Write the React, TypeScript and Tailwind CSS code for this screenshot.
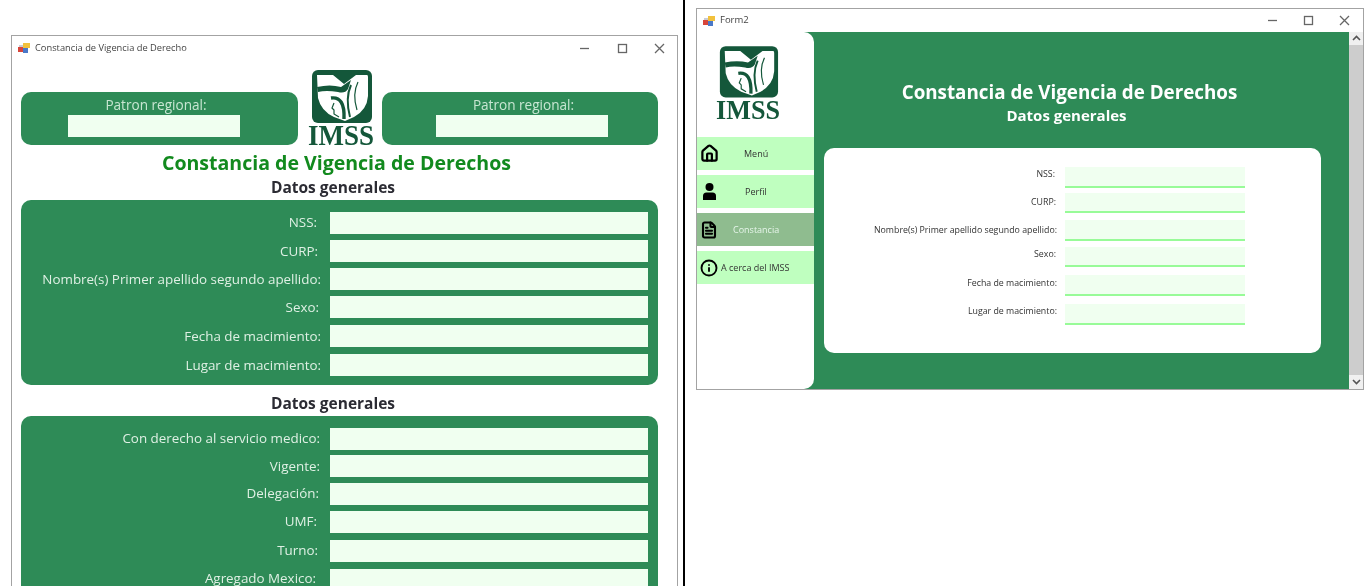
import { Home, FileText, Info } from "lucide-react";

const sans = "font-['Open_Sans',sans-serif]";

function AppIcon() {
  return (
    <svg width="13" height="12" viewBox="0 0 13 12" className="shrink-0">
      <rect x="0" y="5" width="5" height="5" fill="#d8453a" />
      <rect x="5" y="1" width="7" height="5" fill="#f2c13c" />
      <rect x="5" y="6" width="5" height="5" fill="#4a78c8" />
      <rect x="1" y="3" width="4" height="2" fill="#c9ccd6" />
    </svg>
  );
}

function WinButtons({ gapClass }: { gapClass: string }) {
  return (
    <div className={`flex items-center ${gapClass}`}>
      <svg width="11" height="11" viewBox="0 0 11 11"><path d="M1 5.5H10" stroke="#666" strokeWidth="1.3" /></svg>
      <svg width="11" height="11" viewBox="0 0 11 11"><rect x="1.5" y="1.5" width="8" height="8" fill="none" stroke="#666" strokeWidth="1.3" /></svg>
      <svg width="11" height="11" viewBox="0 0 11 11"><path d="M1 1L10 10M10 1L1 10" stroke="#666" strokeWidth="1.3" /></svg>
    </div>
  );
}

function Logo({ width, height }: { width: number; height: number }) {
  return (
    <svg width={width} height={height} viewBox="0 0 66 77" className="shrink-0 overflow-visible">
      <rect x="4" y="1" width="60" height="53" rx="6" fill="#14573a" />
      <g transform="translate(4 1)">
        <path d="M5 5L21 5L32 14L44 5L55 5Q56 5 56 7L56 26Q55 40 42 47L33 51L22 47Q9 41 6 28Z" fill="#fff" />
        <path d="M5 17Q18 14 29 17L39 10L36 19Q33 24 26 22Q14 20 6 22Z" fill="#14573a" />
        <path d="M39 15Q33 28 38 47" fill="none" stroke="#14573a" strokeWidth="2" />
        <path d="M46 12Q40 24 45 40" fill="none" stroke="#14573a" strokeWidth="1.2" />
        <path d="M19 28Q33 26 32 49" fill="none" stroke="#14573a" strokeWidth="3.4" />
        <path d="M22 33L20 38L22 40L22 44L27 47" fill="none" stroke="#14573a" strokeWidth="1.2" />
      </g>
      <text x="33" y="76" textAnchor="middle" textLength="66" lengthAdjust="spacingAndGlyphs" fontFamily="Liberation Serif, serif" fontWeight="700" fontSize="29" fill="#14573a">IMSS</text>
    </svg>
  );
}

function PersonIcon() {
  return (
    <svg width="13" height="17" viewBox="0 0 13 17">
      <circle cx="6.5" cy="4" r="4" fill="#000" />
      <path d="M0 17V13Q0 9.5 3.5 9.5H9.5Q13 9.5 13 13V17Z" fill="#000" />
    </svg>
  );
}

function LeftRow({ label, rowClass, labelClass }: { label: string; rowClass: string; labelClass: string }) {
  return (
    <div className={`flex items-start ${rowClass}`}>
      <div className={`w-[309px] text-right text-[13.4px] leading-[22px] text-[#dff0e4] whitespace-nowrap ${labelClass}`}>{label}</div>
      <div className="w-[318px] h-[22px] bg-[#f0fff0]" />
    </div>
  );
}

function PatronPanel({ widthClass, textClass, inputClass }: { widthClass: string; textClass: string; inputClass: string }) {
  return (
    <div className={`${widthClass} h-[53px] mb-[1px] rounded-[10px] bg-[#2e8b57] flex flex-col items-center pt-[3px]`}>
      <div className={`text-[13.6px] leading-[19px] text-[#c8e6d2] ${textClass}`}>Patron regional:</div>
      <div className={`w-[172px] h-[22px] mt-[1px] bg-[#f0fff0] ${inputClass}`} />
    </div>
  );
}

function LeftWindow() {
  const a = [
    { l: "NSS:", r: "h-[28px]", c: "pr-[13px] -mt-[1px]" },
    { l: "CURP:", r: "h-[28px]", c: "pr-[12px]" },
    { l: "Nombre(s) Primer apellido segundo apellido:", r: "h-[28px]", c: "pr-[9px]" },
    { l: "Sexo:", r: "h-[29px]", c: "pr-[11px]" },
    { l: "Fecha de macimiento:", r: "h-[29px]", c: "pr-[9px]" },
    { l: "Lugar de macimiento:", r: "h-[22px]", c: "pr-[9px]" },
  ];
  const b = [
    { l: "Con derecho al servicio medico:", r: "h-[27px]", c: "pr-[10px] -mt-[1px]" },
    { l: "Vigente:", r: "h-[28px]", c: "pr-[10px]" },
    { l: "Delegación:", r: "h-[28px]", c: "pr-[11px] -mt-[1px]" },
    { l: "UMF:", r: "h-[29px]", c: "pr-[13px] -mt-[1px]" },
    { l: "Turno:", r: "h-[29px]", c: "pr-[12px] -mt-[1px]" },
    { l: "Agregado Mexico:", r: "h-[22px]", c: "pr-[14px] -mt-[2px]" },
  ];
  return (
    <div className="w-[667px] h-[551px] border-x border-t border-[#a3a3a3] overflow-hidden bg-white">
      <div className="h-[24px] flex items-center justify-between pl-[6px] pr-[12px]">
        <div className="flex items-center gap-[4px] text-[9.3px] text-[#444]">
          <AppIcon />
          <span>Constancia de Vigencia de Derecho</span>
        </div>
        <WinButtons gapClass="gap-[26.5px]" />
      </div>
      <div className="px-[9px] pt-[9px] w-[655px]">
        <div className="flex items-end">
          <PatronPanel widthClass="w-[277px]" textClass="mr-[7px]" inputClass="mr-[12px]" />
          <div className="ml-[10px] mr-[8px]"><Logo width={66} height={77} /></div>
          <PatronPanel widthClass="w-[276px]" textClass="ml-[7px]" inputClass="ml-[3px]" />
        </div>
        <div className="mt-[3px] h-[28px] pr-[6px] text-center text-[19.55px] leading-[28px] font-bold text-[#128a1e] whitespace-nowrap">Constancia de Vigencia de Derechos</div>
        <div className="h-[21px] pr-[13px] text-center text-[15.5px] leading-[20px] font-bold text-[#2b2b33]">Datos generales</div>
        <div className="mt-[2px] w-[637px] h-[185px] rounded-[10px] bg-[#2e8b57] pt-[12px]">
          {a.map((x) => <LeftRow key={x.l} label={x.l} rowClass={x.r} labelClass={x.c} />)}
        </div>
        <div className="h-[31px] pt-[8px] pr-[13px] text-center text-[15.5px] leading-[21px] font-bold text-[#2b2b33]">Datos generales</div>
        <div className="w-[637px] h-[200px] rounded-[10px] bg-[#2e8b57] pt-[12px]">
          {b.map((x) => <LeftRow key={x.l} label={x.l} rowClass={x.r} labelClass={x.c} />)}
        </div>
      </div>
    </div>
  );
}

function NavItem({ icon, label, active, textClass }: { icon: React.ReactNode; label: string; active?: boolean; textClass: string }) {
  return (
    <div className={`h-[33px] mb-[5px] flex items-center ${active ? "bg-[#8fbc8f] text-[#e6f5ea]" : "bg-[#bfffbf] text-[#333]"}`}>
      <div className="w-[24px] flex justify-center shrink-0 text-black">{icon}</div>
      <div className={`text-[9px] whitespace-nowrap ${textClass}`}>{label}</div>
    </div>
  );
}

function FormRow({ label, rowClass, labelClass }: { label: string; rowClass: string; labelClass: string }) {
  return (
    <div className={`flex items-start ${rowClass}`}>
      <div className={`w-[233px] text-right text-[8.8px] leading-[12px] text-[#333] whitespace-nowrap ${labelClass}`}>{label}</div>
      <div className="ml-[8px] w-[180px] h-full bg-[#f0fff0] border-b-2 border-[#98fb98]" />
    </div>
  );
}

function RightWindow() {
  return (
    <div className="w-[668px] h-[382px] border border-[#a3a3a3] bg-white flex flex-col">
      <div className="h-[23px] shrink-0 flex items-center justify-between pl-[6px] pr-[13px]">
        <div className="flex items-center gap-[4px] text-[9.5px] text-[#444]">
          <AppIcon />
          <span>Form2</span>
        </div>
        <WinButtons gapClass="gap-[25px]" />
      </div>
      <div className="flex-1 flex min-h-0">
        <div className="flex-1 bg-[#2e8b57] flex">
          <div className="w-[117px] bg-white rounded-r-[10px] flex flex-col">
            <div className="h-[105px] pt-[13px] pl-[19px]"><Logo width={64} height={75} /></div>
            <NavItem icon={<Home size={19} strokeWidth={2.8} />} label="Menú" textClass="ml-[23px]" />
            <NavItem icon={<PersonIcon />} label="Perfil" textClass="ml-[24px]" />
            <NavItem active icon={<FileText size={18} strokeWidth={2.8} />} label="Constancia" textClass="ml-[12px]" />
            <NavItem icon={<Info size={18} strokeWidth={2.5} />} label="A cerca del IMSS" textClass="ml-[0px]" />
          </div>
          <div className="flex-1 pl-[10px] pr-[28px]">
            <div className="pt-[46px] h-[116px] text-center text-white">
              <div className="pr-[6px] text-[18.8px] leading-[28px] font-bold whitespace-nowrap">Constancia de Vigencia de Derechos</div>
              <div className="pr-[12px] text-[15px] leading-[18px] font-bold">Datos generales</div>
            </div>
            <div className="w-[497px] h-[205px] bg-white rounded-[10px] pt-[19px]">
              <FormRow label="NSS:" rowClass="h-[21px] mb-[5px]" labelClass="pt-[1px] pr-[2px]" />
              <FormRow label="CURP:" rowClass="h-[20px] mb-[7px]" labelClass="pt-[3px] pr-[1px]" />
              <FormRow label="Nombre(s) Primer apellido segundo apellido:" rowClass="h-[21px] mb-[6px]" labelClass="pt-[4px]" />
              <FormRow label="Sexo:" rowClass="h-[20px] mb-[8px]" labelClass="pt-[1px] pr-[1px]" />
              <FormRow label="Fecha de macimiento:" rowClass="h-[21px] mb-[8px]" labelClass="pt-[2px]" />
              <FormRow label="Lugar de macimiento:" rowClass="h-[21px]" labelClass="pt-[1px]" />
            </div>
          </div>
        </div>
        <div className="w-[15px] bg-[#f0f0f0] flex flex-col items-center justify-between">
          <svg width="9" height="13" viewBox="0 0 9 13"><path d="M1 8L4.5 4.5L8 8" fill="none" stroke="#555" strokeWidth="1.6" /></svg>
          <div className="flex-1 w-full bg-[#cdcdcd]" />
          <svg width="9" height="14" viewBox="0 0 9 14"><path d="M1 5L4.5 8.5L8 5" fill="none" stroke="#555" strokeWidth="1.6" /></svg>
        </div>
      </div>
    </div>
  );
}

export default function App() {
  return (
    <div className={`w-[1365px] h-[586px] overflow-hidden bg-white flex items-start blur-[0.4px] ${sans}`}>
      <div className="w-[683px] h-full pt-[35px] pl-[11px] shrink-0"><LeftWindow /></div>
      <div className="w-[2px] h-full bg-black shrink-0" />
      <div className="pt-[8px] pl-[11px]"><RightWindow /></div>
    </div>
  );
}
